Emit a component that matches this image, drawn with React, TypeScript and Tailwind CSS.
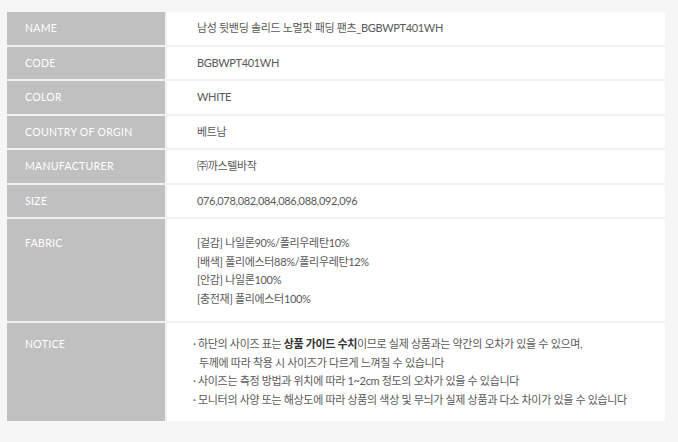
const rows: { label: string; value: string }[] = [
  { label: 'NAME', value: '남성 뒷밴딩 솔리드 노멀핏 패딩 팬츠_BGBWPT401WH' },
  { label: 'CODE', value: 'BGBWPT401WH' },
  { label: 'COLOR', value: 'WHITE' },
  { label: 'COUNTRY OF ORGIN', value: '베트남' },
  { label: 'MANUFACTURER', value: '㈜까스텔바작' },
  { label: 'SIZE', value: '076,078,082,084,086,088,092,096' },
];

const fabric = [
  '[겉감] 나일론90%/폴리우레탄10%',
  '[배색] 폴리에스터88%/폴리우레탄12%',
  '[안감] 나일론100%',
  '[충전재] 폴리에스터100%',
];

const Label = ({ children, pad }: { children: string; pad?: string }) => (
  <div
    className={`w-[158px] shrink-0 bg-[#c0c0c0] pl-[18px] text-[10.5px] text-white tracking-[0.03em] font-['Lato','Noto_Sans_CJK_KR',sans-serif] ${
      pad ?? 'flex items-center pt-[2px]'
    }`}
  >
    {children}
  </div>
);

export default function App() {
  return (
    <div className="w-[678px] h-[442px] bg-[#f6f6f6] pt-[12px] pl-[7px]">
      <div className="w-[658px] flex flex-col gap-[2px] bg-[#f1f1f1] text-[11px] text-[#595959] font-['Lato','Noto_Sans_CJK_KR',sans-serif] tracking-[-0.03em]">
        {rows.map((r) => (
          <div key={r.label} className="flex gap-[2px] h-[32.5px]">
            <Label>{r.label}</Label>
            <div className="flex-1 bg-white flex items-center pl-[30px]">{r.value}</div>
          </div>
        ))}
        <div className="flex gap-[2px] h-[102px]">
          <Label pad="pt-[17px]">FABRIC</Label>
          <div className="flex-1 bg-white pl-[30px] pt-[15px] leading-[18.5px]">
            {fabric.map((f) => (
              <div key={f}>{f}</div>
            ))}
          </div>
        </div>
        <div className="flex gap-[2px] h-[98px]">
          <Label pad="pt-[14px]">NOTICE</Label>
          <div className="flex-1 bg-white pl-[26px] pt-[12px] leading-[18.5px]">
            <div>
              · 하단의 사이즈 표는 <b className="font-bold text-[#333]">상품 가이드 수치</b>이므로 실제 상품과는 약간의 오차가 있을 수 있으며,
            </div>
            <div className="pl-[6px]">두께에 따라 착용 시 사이즈가 다르게 느껴질 수 있습니다</div>
            <div>· 사이즈는 측정 방법과 위치에 따라 1~2cm 정도의 오차가 있을 수 있습니다</div>
            <div>· 모니터의 사양 또는 해상도에 따라 상품의 색상 및 무늬가 실제 상품과 다소 차이가 있을 수 있습니다</div>
          </div>
        </div>
      </div>
    </div>
  );
}
